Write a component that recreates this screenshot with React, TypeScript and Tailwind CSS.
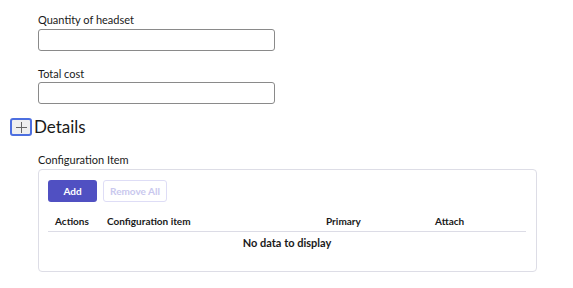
import React from "react";

export default function App() {
  return (
    <div className="w-[573px] h-[288px] bg-white text-[#1a1a1a] relative" style={{ fontFamily: "Lato, 'Noto Sans', sans-serif" }}>
      <div className="pt-[13px] pl-[38px]">
        <div className="text-[11px] leading-[14px] h-[16px]">Quantity of headset</div>
        <div className="w-[237px] h-[22px] border border-[#8a8a8a] rounded-[3px]"></div>
        <div className="text-[11px] leading-[14px] h-[14px] mt-[16px]">Total cost</div>
        <div className="w-[237px] h-[22px] border border-[#8a8a8a] rounded-[3px] mt-[1px]"></div>
      </div>
      <div className="flex items-start pl-[10px] mt-[14px] h-[18px]">
        <div className="w-[22px] h-[18px] border-2 border-[#4d6fe0] rounded-[3px] bg-[#efefef] flex items-center justify-center">
          <svg width="11" height="11" viewBox="0 0 11 11">
            <path d="M5.5 0V11M0 5.5H11" stroke="#666" strokeWidth="1" />
          </svg>
        </div>
        <div className="text-[17px] leading-[18px] ml-[2px]">Details</div>
      </div>
      <div className="pl-[38px] mt-[17px]">
        <div className="text-[11px] leading-[14px] h-[14px]">Configuration Item</div>
        <div className="w-[499px] h-[103px] border border-[#dddde6] rounded-[4px] mt-[2px] px-[9px] pt-[10px]">
          <div className="flex gap-[6px]">
            <div className="w-[49px] h-[22px] bg-[#5050c2] rounded-[3px] text-white text-[10px] font-bold flex items-center justify-center">Add</div>
            <div className="w-[64px] h-[22px] border border-[#deddf6] rounded-[3px] text-[#c9c8ee] text-[10px] font-bold flex items-center justify-center">Remove All</div>
          </div>
          <div className="w-[478px] mt-[10px] flex h-[20px] items-center border-b border-[#dcdce6] text-[10px] font-bold pb-[1px]">
            <div className="w-[52px] pl-[7px]">Actions</div>
            <div className="w-[219px] pl-[7px]">Configuration item</div>
            <div className="w-[109px] pl-[7px]">Primary</div>
            <div className="w-[98px] pl-[7px]">Attach</div>
          </div>
          <div className="w-[478px] text-center text-[11px] leading-[14px] font-bold mt-[4px]">No data to display</div>
        </div>
      </div>
    </div>
  );
}
